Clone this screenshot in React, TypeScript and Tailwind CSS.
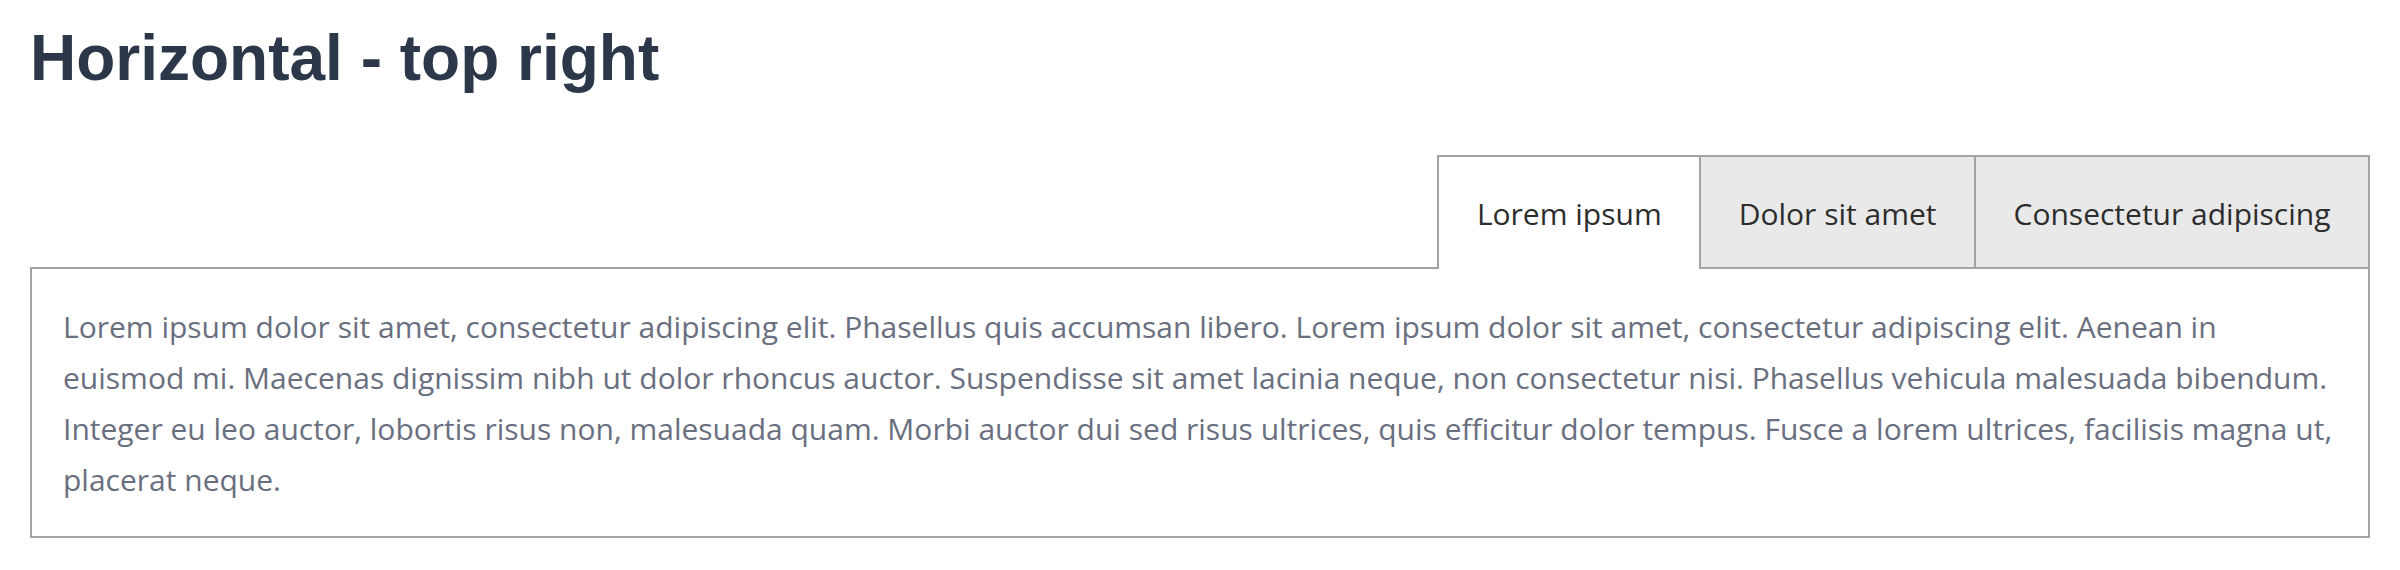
import { useState } from "react";

const tabs = ["Lorem ipsum", "Dolor sit amet", "Consectetur adipiscing"];

const App = () => {
  const [active, setActive] = useState<number>(0);

  return (
    <div className="w-full bg-white px-[30px] pt-[20px]">
      <h1 className="text-[64px] leading-[1.2] font-bold text-[#2c3849] font-['Liberation_Sans',Arial,sans-serif] mb-[58px]">
        Horizontal - top right
      </h1>

      <div className="font-['Open_Sans',sans-serif]">
        {/* tabs */}
        <div className="flex justify-end -mb-[2px] relative z-10">
          {tabs.map((t, i) => (
            <div
              key={t}
              onClick={() => setActive(i)}
              className={
                i === active
                  ? "bg-white text-[#2d2d2d] text-[30px] leading-[51px] px-[37.5px] pt-[31px] pb-[30px] border-t-2 border-r-2 border-[#a3a3a3] cursor-pointer" +
                    (i === 0 ? " border-l-2" : "")
                  : "bg-[#e9e9e9] text-[#2d2d2d] text-[30px] leading-[51px] px-[37.5px] pt-[31px] pb-[28px] border-t-2 border-r-2 border-b-2 border-[#a3a3a3] cursor-pointer" +
                    (i === 0 ? " border-l-2" : "")
              }
            >
              {t}
            </div>
          ))}
        </div>

        {/* panel */}
        <div className="border-2 border-[#a3a3a3] pl-[31px] pr-[28px] pt-[32px] pb-[31px]">
          <p className="text-[30px] leading-[51px] text-[#6a6f80]">
            Lorem ipsum dolor sit amet, consectetur adipiscing elit. Phasellus
            quis accumsan libero. Lorem ipsum dolor sit amet, consectetur
            adipiscing elit. Aenean in euismod mi. Maecenas dignissim nibh ut
            dolor rhoncus auctor. Suspendisse sit amet lacinia neque, non
            consectetur nisi. Phasellus vehicula malesuada bibendum. Integer eu
            leo auctor, lobortis risus non, malesuada quam. Morbi auctor dui sed
            risus ultrices, quis efficitur dolor tempus. Fusce a lorem ultrices,
            facilisis magna ut, placerat neque.
          </p>
        </div>
      </div>
    </div>
  );
};

export default App;
